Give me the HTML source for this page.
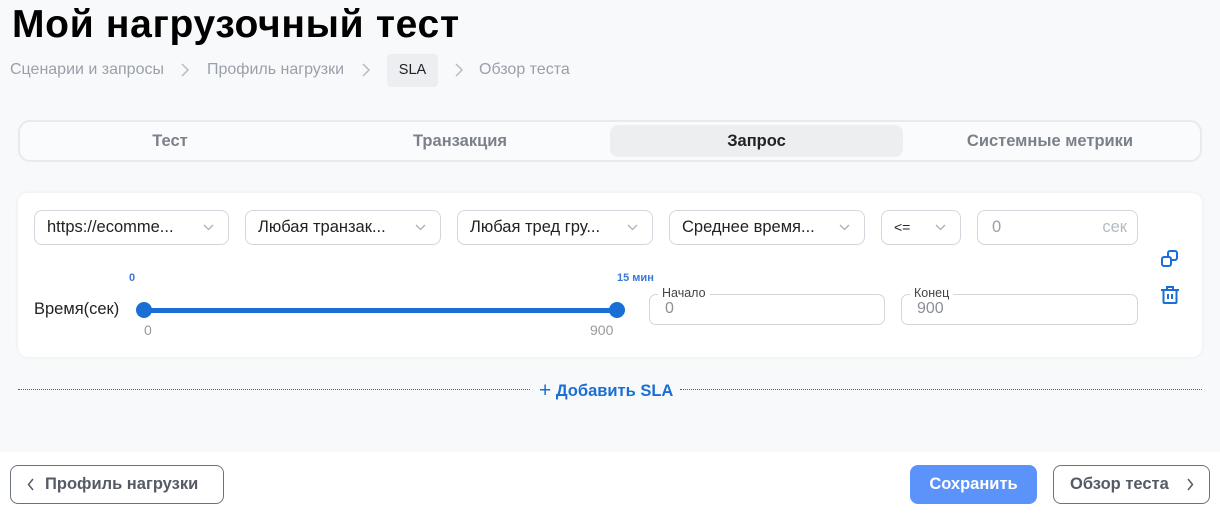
<!DOCTYPE html>
<html><head><meta charset="utf-8"><style>
*{box-sizing:border-box;margin:0;padding:0}
body{width:1220px;height:517px;background:#f8f9fa;font-family:"Liberation Sans",sans-serif;position:relative;overflow:hidden;color:#222}
.a{position:absolute}
h1{position:absolute;left:12px;top:3px;font-size:39px;font-weight:700;color:#000;letter-spacing:0.7px}
.bc{font-size:16px;color:#9aa0ab;top:61px}
.chev{top:61px;width:10px;height:18px}
.tabs{left:18px;top:120px;width:1184px;height:42px;border:2px solid #e8eaee;border-radius:12px;background:#fafbfc}
.tab{top:0;height:38px;line-height:38px;font-size:16.5px;font-weight:700;color:#7b818b;text-align:center}
.card{left:18px;top:193px;width:1184px;height:164px;background:#fff;border-radius:10px;box-shadow:0 0 4px rgba(0,0,0,0.06)}
.sel{top:210px;height:35px;border:1px solid #d3d6dc;border-radius:8px;background:#fff;font-size:16.5px;line-height:33px;padding-left:12px;color:#222}
.sel svg{position:absolute;right:14px;top:13px}
.fld{top:294px;height:31px;border:1px solid #d3d6dc;border-radius:7px;font-size:16px;color:#8a8f98;padding:5px 0 0 15px}
.lg{top:-9px;left:8px;background:#fff;font-size:12.5px;color:#444;padding:0 4px;line-height:14px}
.btn{top:465px;height:39px;border:1px solid #6b7280;border-radius:8px;font-size:16.5px;font-weight:700;color:#555b66;line-height:37px;background:#fff}
</style></head><body>
<h1>Мой нагрузочный тест</h1>
<div class="a bc" style="left:10px">Сценарии и запросы</div>
<svg class="a chev" style="left:180px" viewBox="0 0 10 18"><path d="M2 3l6 6-6 6" fill="none" stroke="#b7bcc4" stroke-width="1.5"/></svg>
<div class="a bc" style="left:207px">Профиль нагрузки</div>
<svg class="a chev" style="left:361px" viewBox="0 0 10 18"><path d="M2 3l6 6-6 6" fill="none" stroke="#b7bcc4" stroke-width="1.5"/></svg>
<div class="a" style="left:387px;top:54px;width:51px;height:33px;background:#eceef2;border-radius:4px;font-size:14.5px;line-height:33px;text-align:center;color:#222">SLA</div>
<svg class="a chev" style="left:454px" viewBox="0 0 10 18"><path d="M2 3l6 6-6 6" fill="none" stroke="#b7bcc4" stroke-width="1.5"/></svg>
<div class="a bc" style="left:479px">Обзор теста</div>

<div class="a tabs">
<div class="a tab" style="left:0;width:300px">Тест</div>
<div class="a tab" style="left:290px;width:300px">Транзакция</div>
<div class="a" style="left:590px;top:3px;width:293px;height:32px;background:#eceef0;border-radius:8px"></div>
<div class="a tab" style="left:590px;width:293px;color:#222">Запрос</div>
<div class="a tab" style="left:880px;width:300px">Системные метрики</div>
</div>

<div class="a card"></div>
<div class="a sel" style="left:34px;width:195px">https://ecomme...<svg width="11" height="7"><path d="M1 1l4.5 4.5L10 1" fill="none" stroke="#aab0b8" stroke-width="1.3"/></svg></div>
<div class="a sel" style="left:245px;width:196px">Любая транзак...<svg width="11" height="7"><path d="M1 1l4.5 4.5L10 1" fill="none" stroke="#aab0b8" stroke-width="1.3"/></svg></div>
<div class="a sel" style="left:457px;width:196px">Любая тред гру...<svg width="11" height="7"><path d="M1 1l4.5 4.5L10 1" fill="none" stroke="#aab0b8" stroke-width="1.3"/></svg></div>
<div class="a sel" style="left:669px;width:196px">Среднее время...<svg width="11" height="7"><path d="M1 1l4.5 4.5L10 1" fill="none" stroke="#aab0b8" stroke-width="1.3"/></svg></div>
<div class="a sel" style="left:881px;width:80px;font-size:14px">&lt;=<svg width="11" height="7"><path d="M1 1l4.5 4.5L10 1" fill="none" stroke="#aab0b8" stroke-width="1.3"/></svg></div>
<div class="a sel" style="left:977px;width:161px;color:#9aa0a8;padding-left:14px">0<span style="position:absolute;right:10px;color:#b5bac2">сек</span></div>

<div class="a" style="left:129px;top:272px;font-size:11px;font-weight:700;color:#3a78d8">0</div>
<div class="a" style="left:617px;top:272px;font-size:11px;font-weight:700;color:#3a78d8">15 мин</div>
<div class="a" style="left:34px;top:300px;font-size:16.5px;color:#222">Время(сек)</div>
<div class="a" style="left:144px;top:308px;width:473px;height:5px;background:#1a6fd6"></div>
<div class="a" style="left:136px;top:302px;width:16px;height:16px;border-radius:50%;background:#1a6fd6"></div>
<div class="a" style="left:609px;top:302px;width:16px;height:16px;border-radius:50%;background:#1a6fd6"></div>
<div class="a" style="left:144px;top:322px;font-size:14px;color:#999">0</div>
<div class="a" style="left:590px;top:322px;font-size:14px;color:#999">900</div>

<div class="a fld" style="left:649px;width:236px"><span class="a lg">Начало</span>0</div>
<div class="a fld" style="left:901px;width:237px"><span class="a lg">Конец</span>900</div>

<svg class="a" style="left:1160px;top:249px" width="20" height="20" viewBox="0 0 20 20" fill="none" stroke="#1a6fd6" stroke-width="2"><rect x="2" y="8" width="9" height="9" rx="2"/><path d="M8 8V4a2 2 0 0 1 2-2h5a2 2 0 0 1 2 2v5a2 2 0 0 1-2 2h-4"/></svg>
<svg class="a" style="left:1160px;top:285px" width="20" height="20" viewBox="0 0 20 20" fill="none" stroke="#1a6fd6" stroke-width="2"><path d="M1 5h18M7 5V2h6v3M3.5 5v12a1 1 0 0 0 1 1h11a1 1 0 0 0 1-1V5M8 9v5M12 9v5"/></svg>

<div class="a" style="left:18px;top:389px;width:512px;border-top:1px dotted #2a66c4"></div>
<div class="a" style="left:680px;top:389px;width:522px;border-top:1px dotted #2a66c4"></div>
<div class="a" style="left:539px;top:378px;font-size:16.5px;font-weight:700;color:#1a6fd6"><span style="font-size:21px;font-weight:400;position:relative;top:1px">+</span> Добавить SLA</div>

<div class="a" style="left:0;top:452px;width:1220px;height:65px;background:#fff"></div>
<div class="a btn" style="left:10px;width:214px;padding-left:34px">Профиль нагрузки<svg class="a" style="left:16px;top:12px" width="8" height="13"><path d="M6 1L1.5 6.5 6 12" fill="none" stroke="#555b66" stroke-width="1.5"/></svg></div>
<div class="a btn" style="left:910px;width:127px;background:#5b93fb;border-color:#5b93fb;color:#fff;text-align:center">Сохранить</div>
<div class="a btn" style="left:1053px;width:157px;padding-left:16px">Обзор теста<svg class="a" style="left:132px;top:12px" width="8" height="13"><path d="M2 1l4.5 5.5L2 12" fill="none" stroke="#555b66" stroke-width="1.5"/></svg></div>
</body></html>
